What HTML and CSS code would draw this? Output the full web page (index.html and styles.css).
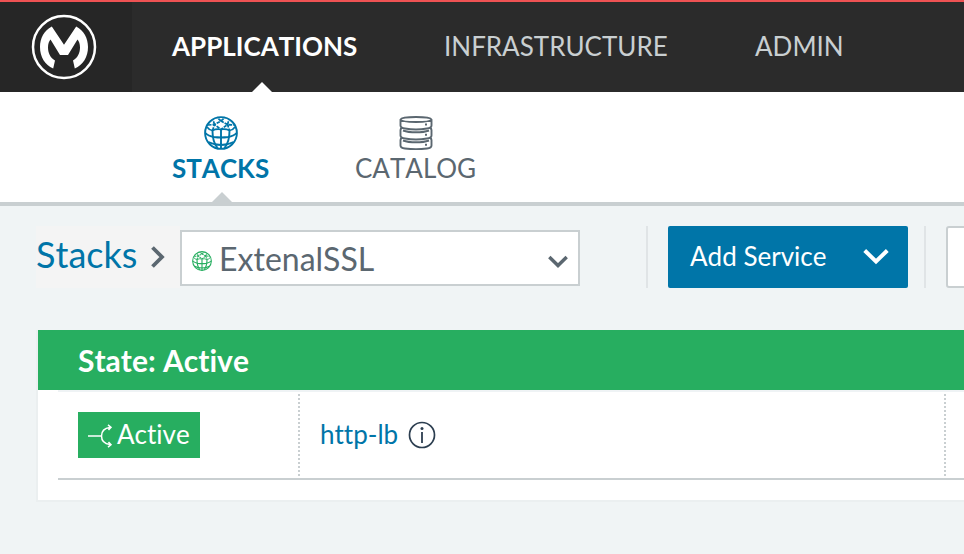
FILE: index.html
```html
<!DOCTYPE html>
<html lang="en">
<head>
<meta charset="utf-8">
<title>Stacks</title>
<link rel="stylesheet" href="styles.css">
</head>
<body>
<svg class="defs" width="0" height="0" aria-hidden="true">
  <symbol id="globe" viewBox="0 0 34 34">
    <g fill="none" stroke="currentColor" stroke-width="1.9">
      <circle cx="17" cy="17" r="15.900"/>
      <path d="M17 14V33M1.500 17Q4 20 10 21Q17 22 24 21Q30 20 32.500 17M4.500 26Q10 29 17 29Q24 29 29.500 26"/>
      <path d="M8.500 15Q8.500 26 13.500 32M25.500 15Q25.500 26 20.500 32"/>
      <path d="M3 11Q5 14 8.500 14.500Q12.500 12.500 17 13.500Q21.500 12.500 25.500 14.500Q29 14 31 11" stroke-width="1.600"/>
      <path d="M8.500 14.500L10.500 8.500L17 13.500L23.500 8.500L25.500 14.500M4 9L10.500 8.500L17 5L23.500 8.500L30 9M10.500 8.500L9 3.500M23.500 8.500L25 3.500M17 5L13 1.500M17 5L21 1.500" stroke-width="1.700" stroke-dasharray="3.500 1"/>
    </g>
  </symbol>
</svg>
<header class="topbar">
  <a class="logo">
    <svg width="66" height="66" viewBox="0 0 66 66">
      <circle cx="33" cy="33" r="31" fill="none" stroke="#fff" stroke-width="2.500"/>
      <path fill="#fff" d="M20.800 12.500L33 30.800L45.200 12.500C53 17 57 24 57 33C57 43 52 51 43.800 54.500L42 46.500C47 43.500 49 38.500 49 33.500C49 30 48 27 46.500 25.500L37 41H29L19.500 25.500C18 27 17 30 17 33.500C17 38.500 19 43.500 24 46.500L22.200 54.500C14 51 9 43 9 33C9 24 13 17 20.800 12.500Z"/>
    </svg>
  </a>
  <nav class="mainnav">
    <a class="active"><span>APPLICATIONS</span></a>
    <a class="infra"><span>INFRASTRUCTURE</span></a>
    <a class="admin"><span>ADMIN</span></a>
  </nav>
</header>
<nav class="subnav">
  <a class="tab selected">
    <svg class="tabicon" width="34" height="34"><use href="#globe"/></svg>
    <span>STACKS</span>
  </a>
  <a class="tab catalog">
    <svg class="tabicon" width="34" height="34" viewBox="0 0 34 34" fill="none" stroke="currentColor" stroke-width="1.900">
      <path d="M1.500 3.500V9.500Q1.500 12 6 12.500Q17 14.500 28 12.500Q32.500 12 32.500 9.500V3.500Q31.500 1 17 1Q2.500 1 1.500 3.500Q2.500 6 17 6Q31.500 6 32.500 3.500"/>
      <path d="M3 12Q1.500 12.500 1.500 14V19.500Q1.500 22 6 22.500Q17 24.500 28 22.500Q32.500 22 32.500 19.500V14Q32.500 12.500 31 12M4 14.500Q9 16.300 17 16.300Q25 16.300 30 14.500"/>
      <path d="M3 22Q1.500 22.500 1.500 24V29.500Q1.500 32 6 32.500Q17 34 28 32.500Q32.500 32 32.500 29.500V24Q32.500 22.500 31 22M4 24.500Q9 26.300 17 26.300Q25 26.300 30 24.500"/>
      <path stroke-width="2" d="M26 8.500h2M26 18.700h2M26 28.800h2"/>
    </svg>
    <span>CATALOG</span>
  </a>
</nav>
<section class="toolbar">
  <div class="crumb">
    <a>Stacks</a>
    <svg width="16" height="24" viewBox="0 0 16 24"><path d="M2.500 2.500L12 12L2.500 21.500" fill="none" stroke="#5b6770" stroke-width="3.800"/></svg>
  </div>
  <div class="picker">
    <svg class="mini" width="20" height="20"><use href="#globe"/></svg>
    <span>ExtenalSSL</span>
    <svg class="chev" width="20" height="14" viewBox="0 0 20 14"><path d="M1.300 2L10 10.500L18.700 2" fill="none" stroke="#5b6770" stroke-width="3.400"/></svg>
  </div>
  <i class="rule first"></i>
  <button class="add"><span>Add Service</span>
    <svg width="26" height="18" viewBox="0 0 26 18"><path d="M1.700 2.500L13 13.500L24.300 2.500" fill="none" stroke="#fff" stroke-width="4"/></svg>
  </button>
  <i class="rule second"></i>
  <div class="more"></div>
</section>
<main class="panel">
  <h2><span>State: Active</span></h2>
  <div class="row">
    <div class="statecell">
      <div class="badge">
        <svg width="26" height="24" viewBox="0 0 26 24" fill="none" stroke="#fff" stroke-width="1.500">
          <path d="M0 12H13M22 3.500Q13.500 4.500 13.500 12T22 20.500M20 .8L23 3.300L20.500 6M20.500 18L23 20.700L20 23.200"/>
        </svg>
        <span>Active</span>
      </div>
    </div>
    <div class="namecell">
      <a>http-lb</a>
      <svg width="28" height="28" viewBox="0 0 28 28"><circle cx="14" cy="14" r="12.500" fill="none" stroke="#2c3e50" stroke-width="1.700"/><path d="M14 11V22" stroke="#2c3e50" stroke-width="1.800"/><circle cx="14" cy="7.500" r="1.500" fill="#2c3e50"/></svg>
    </div>
    <div class="restcell"></div>
  </div>
</main>
</body>
</html>
```
FILE: styles.css
```css
* { box-sizing: border-box; }
body {
  margin: 0;
  width: 964px;
  height: 554px;
  overflow: hidden;
  background: #f0f4f5;
  color: #5b6770;
  font-family: Lato, "Liberation Sans", sans-serif;
  font-size: 26px;
  font-kerning: none;
  font-variant-ligatures: none;
  white-space: nowrap;
}
svg { display: block; flex: none; }
.defs { position: absolute; }
.topbar {
  display: flex;
  height: 92px;
  border-top: 2px solid #ee5253;
  background: #2b2b2b;
}
.logo { width: 132px; padding: 12px 0 0 31px; background: #262626; }
.mainnav { display: flex; padding-left: 40px; line-height: 88px; color: #c9cfd1; }
.mainnav a { position: relative; }
.active { width: 272px; color: #fff; font-weight: 700; }
.infra { width: 311px; }
.active::after, .selected::after {
  content: "";
  position: absolute;
  bottom: 0;
  left: 80px;
  border: 10px solid transparent;
  border-top: 0;
  border-bottom-color: #fff;
}
.subnav {
  display: flex;
  height: 114px;
  padding-left: 172px;
  border-bottom: 4px solid #c9cfd1;
  background: #fff;
}
.tab { position: relative; padding-top: 24px; line-height: 36px; }
.tab span { display: block; }
.tabicon { margin: 0 auto; }
.selected { width: 98px; color: #0075a8; font-weight: 700; }
.selected::after { left: 40px; border-bottom-color: #c9cfd1; }
.catalog { width: 122px; margin-left: 85px; }
.toolbar { display: flex; height: 124px; padding: 20px 0 0 36px; }
.crumb {
  display: flex;
  flex: none;
  width: 144px;
  height: 62px;
  background: #f4f4f4;
  color: #0075a8;
  font-size: 36px;
  line-height: 57px;
}
.crumb a { width: 114px; }
.crumb svg { margin-top: 19px; }
.picker {
  display: flex;
  flex: none;
  width: 400px;
  height: 56px;
  margin-top: 4px;
  padding-left: 10px;
  border: 2px solid #c9cfd1;
  background: #fff;
  font-size: 32px;
  line-height: 53px;
}
.picker span { width: 329px; margin-left: 7px; }
.mini { margin-top: 19px; color: #27ae60; }
.chev { margin-top: 23px; }
.rule { flex: none; width: 2px; height: 62px; background: #e0e4e6; }
.first { margin: 0 20px 0 66px; }
.second { margin: 0 20px 0 16px; }
.add {
  display: flex;
  flex: none;
  width: 240px;
  height: 62px;
  padding: 0 0 0 22px;
  border: 0;
  border-radius: 2px;
  background: #0075a8;
  color: #fff;
  font: inherit;
  font-kerning: none;
  font-variant-ligatures: none;
  line-height: 61px;
}
.add span { width: 173px; text-align: left; }
.add svg { margin-top: 22px; }
.more { flex: none; width: 60px; height: 62px; border: 2px solid #c9cfd1; border-radius: 3px; background: #fff; }
.panel {
  width: 928px;
  height: 172px;
  margin-left: 36px;
  border: solid #ebeff0;
  border-width: 0 0 2px 2px;
  background: #fff;
}
.panel h2 {
  height: 60px;
  margin: 0;
  padding-left: 40px;
  background: #27ae60;
  color: #fff;
  font-size: 30px;
  line-height: 61px;
}
.row {
  display: flex;
  height: 90px;
  margin-left: 20px;
  border-top: 2px solid #eff3f5;
  border-bottom: 2px solid #c9cfd1;
}
.statecell { width: 240px; padding: 20px 0 0 20px; }
.badge {
  display: flex;
  width: 122px;
  height: 46px;
  padding-left: 10px;
  background: #27ae60;
  color: #fff;
  line-height: 45px;
}
.badge svg { margin: 12px 3px 0 0; }
.namecell, .restcell {
  background: repeating-linear-gradient(#c9cfd1 0 2px, transparent 2px 4px) 0 0 / 2px 82px no-repeat;
  margin-top: 2px;
}
.namecell { display: flex; width: 646px; padding-left: 22px; line-height: 81px; color: #0075a8; }
.namecell a { width: 88px; }
.namecell svg { margin-top: 27px; }
.restcell { width: 20px; }
```
